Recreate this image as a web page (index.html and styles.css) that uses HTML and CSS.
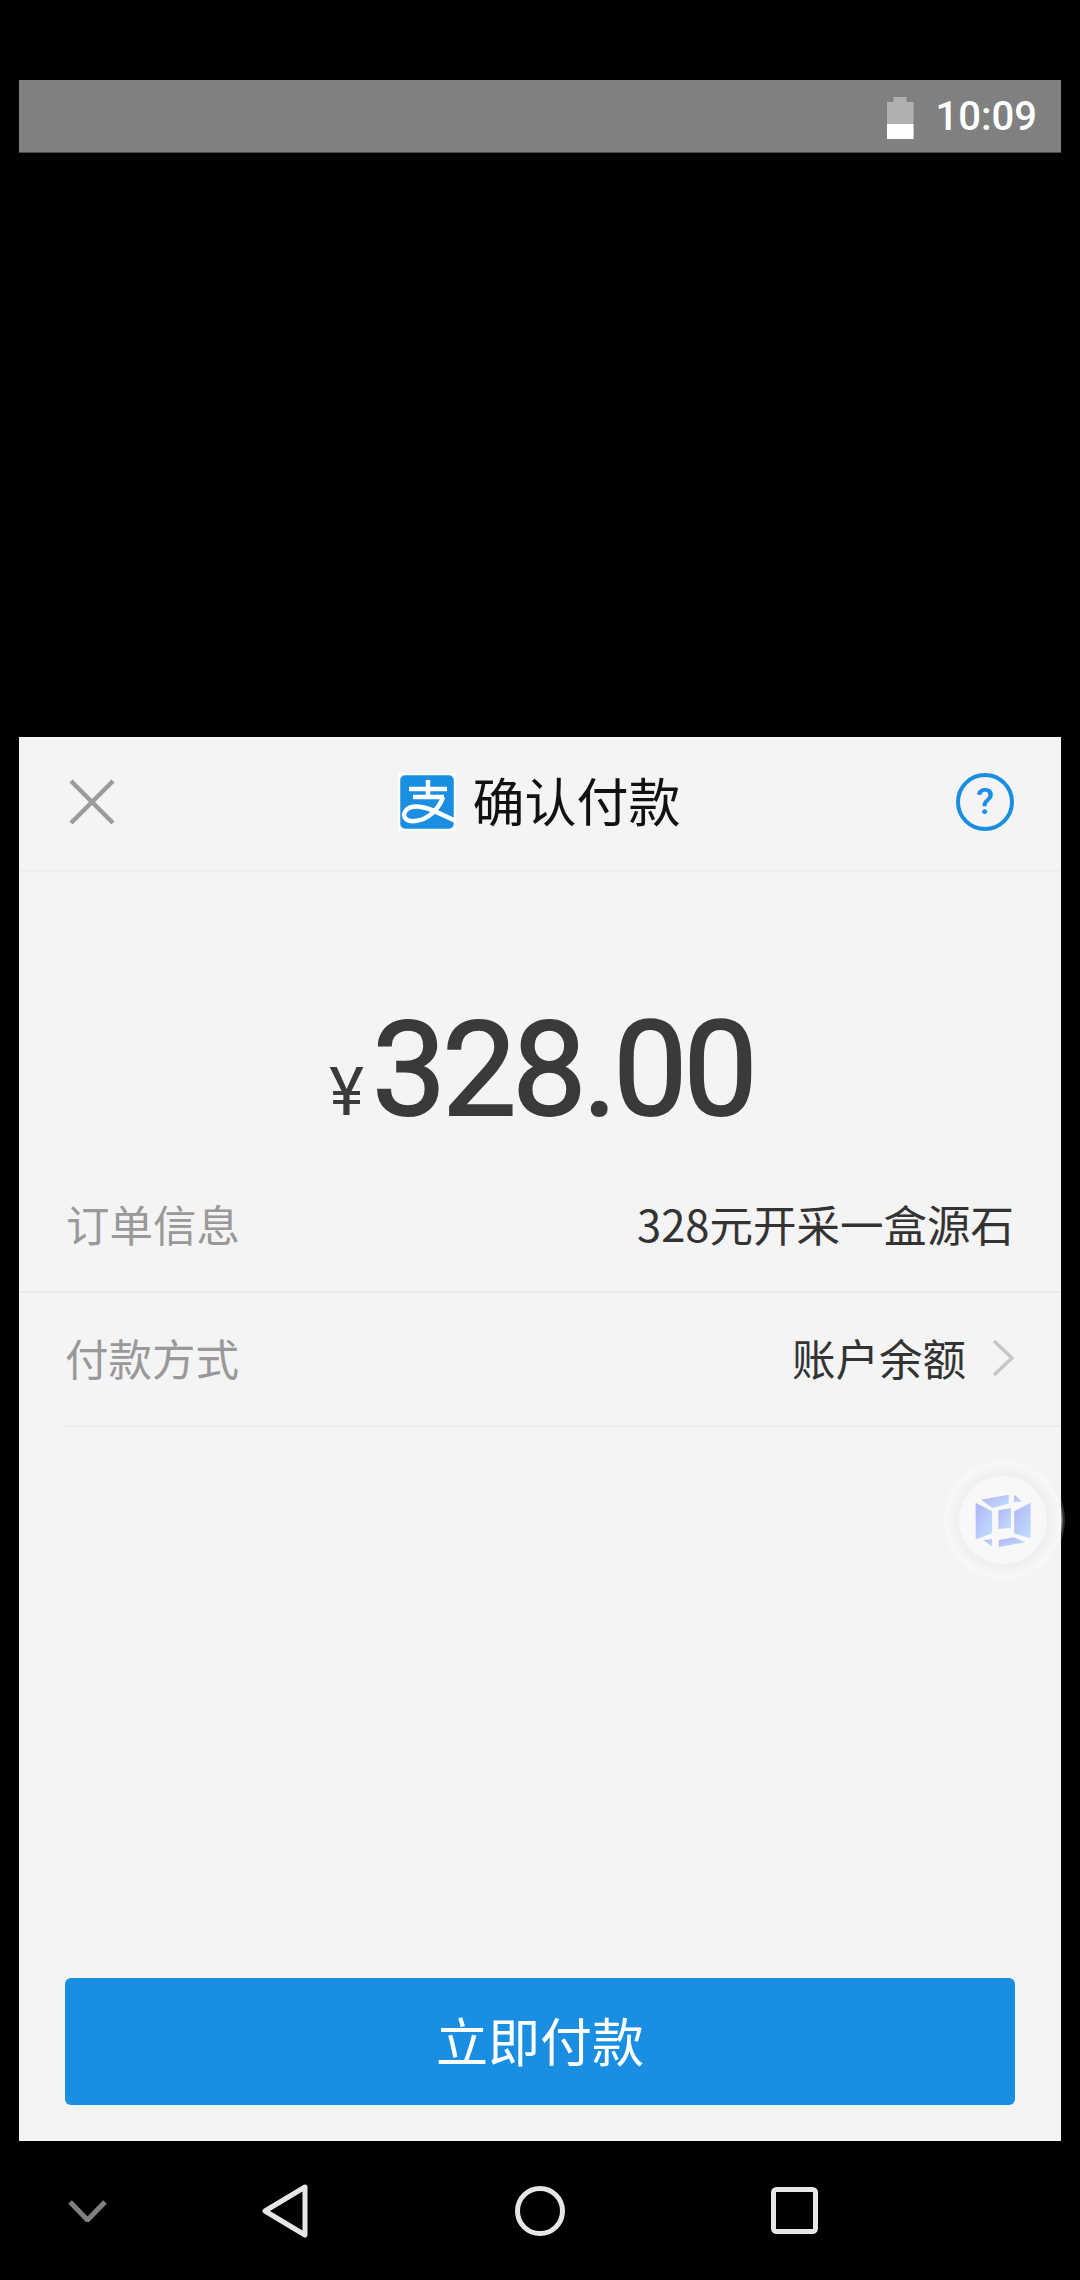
FILE: index.html
```html
<!DOCTYPE html>
<html lang="zh-CN">
<head>
  <meta charset="UTF-8" />
  <title>确认付款</title>
  <link rel="stylesheet" href="styles.css">
</head>
<body>

  <div class="screen">
    <div class="status-bar">
      <div class="battery"><div class="battery-fill"></div></div>
      <span class="clock">10:09</span>
    </div>

    <section class="sheet">
      <header class="sheet-head">
        <svg class="icon-close" viewBox="0 0 46 46">
          <path d="M2 2 L44 44 M44 2 L2 44" />
        </svg>
        <div class="sheet-title">
          <svg class="logo" viewBox="0 0 58 58">
            <rect width="58" height="58" rx="7" fill="#1a8ee1" />
            <path d="M11 16 H49 M30 7 V24 M15 24 H46 M45 24 C41 36 30 47 17 48 C8 49 5 44 6.500 40 C9 33 19 32 28 35 C38 38 48 44 58 48" />
          </svg>
          <h1>确认付款</h1>
        </div>
        <div class="help">?</div>
      </header>

      <div class="amount">
        <span class="yen">¥</span>
        <span class="sum">328.00</span>
      </div>

      <div class="row">
        <span class="row-label">订单信息</span>
        <span class="row-value">328元开采一盒源石</span>
      </div>
      <div class="row row-inset">
        <span class="row-label">付款方式</span>
        <span class="row-value">账户余额</span>
        <svg class="chevron" viewBox="0 0 22 38">
          <path d="M2 2 L20 19 L2 36" />
        </svg>
      </div>

      <div class="sheet-foot">
        <button class="btn-pay">立即付款</button>
      </div>

      <!-- 悬浮球 -->
      <div class="float-ball">
        <div class="float-inner">
          <svg class="cube" viewBox="160 160 182 172">
            <defs>
              <linearGradient id="cubeFill" x1="0" y1="0" x2="1" y2="1">
                <stop offset="0" stop-color="#b2b4f6" />
                <stop offset="1" stop-color="#bfe0fb" />
              </linearGradient>
            </defs>
            <g fill="url(#cubeFill)">
              <polygon points="185,183 268,168 268,195 218,208" />
              <polygon points="285,168 310,188 285,190" />
              <polygon points="168,192 218,218 218,285 172,302 168,298" />
              <polygon points="335,192 285,218 285,285 335,300" />
              <polygon points="237,215 275,208 275,268 237,272" />
              <polygon points="238,305 285,297 318,312 238,327" />
              <polygon points="192,306 218,302 218,326" />
            </g>
          </svg>
        </div>
      </div>
    </section>

    <nav class="nav-bar">
      <svg class="nav-hide" viewBox="0 0 39 22"><path d="M2 2 L19.500 20 L37 2" /></svg>
      <svg class="nav-back" viewBox="0 0 46 54"><path d="M43 3 L3 27 L43 51 Z" /></svg>
      <svg class="nav-home" viewBox="0 0 50 50"><circle cx="25" cy="25" r="22.500" /></svg>
      <svg class="nav-recent" viewBox="0 0 47 47"><rect x="2.500" y="2.500" width="42" height="42" rx="3" /></svg>
    </nav>
  </div>

</body>
</html>
```

FILE: styles.css
```css
* {
  box-sizing: border-box;
}

body {
  margin: 0;
  background-color: #000;
  font-family: "Noto Sans CJK SC", Roboto, sans-serif;
}

.screen {
  width: 1080px;
  height: 2280px;
  display: flex;
  flex-direction: column;
  padding-top: 80px;
}

/* status bar */
.status-bar {
  height: 73px;
  margin: 0 19px 584px;
  background-color: #808080;
  border-bottom: 1px solid #4a4a4a;
  display: flex;
  align-items: center;
  justify-content: flex-end;
  padding-right: 24px;
  gap: 22px;
}

.battery {
  position: relative;
  width: 27px;
  height: 42px;
  margin-top: 4px;
  background-color: #b0b0b0;
  clip-path: polygon(0 5px, 7px 5px, 7px 0, 20px 0, 20px 5px, 100% 5px, 100% 100%, 0 100%);
}

.battery-fill {
  position: absolute;
  left: 0;
  right: 0;
  bottom: 0;
  height: 15px;
  background-color: #fff;
}

.clock {
  font-family: Roboto, sans-serif;
  font-weight: 500;
  font-size: 40px;
  color: #fff;
}

/* sheet */
.sheet {
  position: relative;
  height: 1404px;
  margin: 0 19px;
  background-color: #f4f4f4;
  display: flex;
  flex-direction: column;
}

.sheet-head {
  height: 135px;
  flex-shrink: 0;
  border-bottom: 2px solid #eeeeee;
  display: flex;
  align-items: center;
  justify-content: space-between;
  padding: 0 47px 4px 50px;
}

.icon-close {
  width: 46px;
  height: 46px;
  fill: none;
  stroke: #9b9b9b;
  stroke-width: 4.500;
}

.sheet-title {
  display: flex;
  align-items: center;
  gap: 16px;
  margin-left: 8px;
}

.sheet-title h1 {
  margin: 0;
  padding-bottom: 4px;
  font-size: 52px;
  font-weight: 400;
  line-height: 60px;
  color: #111;
}

.logo {
  width: 58px;
  height: 58px;
  fill: none;
  stroke: #fff;
  stroke-width: 4.500;
}

.help {
  width: 58px;
  height: 58px;
  border: 4px solid #1a8ee1;
  border-radius: 50%;
  display: flex;
  align-items: center;
  justify-content: center;
  font-family: Roboto, sans-serif;
  font-size: 37px;
  font-weight: 500;
  color: #1a8ee1;
}

.amount {
  height: 287px;
  flex-shrink: 0;
  display: flex;
  align-items: baseline;
  justify-content: center;
  padding: 132px 0 0 3px;
  font-family: Roboto, sans-serif;
  color: #3a3a3a;
}

.yen {
  font-size: 66px;
  line-height: 1;
  margin-right: 8px;
}

.sum {
  font-size: 132px;
  font-weight: 400;
  letter-spacing: -4px;
  line-height: 1;
  -webkit-text-stroke: 2px #3a3a3a;
}

.row {
  height: 134px;
  flex-shrink: 0;
  display: flex;
  align-items: center;
  padding: 0 47px 4px;
  border-bottom: 2px solid #ebebeb;
}

.row-inset {
  margin-left: 46px;
  padding-left: 0;
}

.row-label {
  font-size: 43.500px;
  color: #999;
  margin-right: auto;
}

.row-value {
  font-size: 43.500px;
  color: #333;
}

.chevron {
  width: 22px;
  height: 38px;
  margin-left: 26px;
  margin-top: 2px;
  fill: none;
  stroke: #c6c6c6;
  stroke-width: 3.500;
}

.sheet-foot {
  margin-top: auto;
  padding: 0 46px 36px;
}

.btn-pay {
  width: 100%;
  height: 127px;
  border: none;
  border-radius: 6px;
  background-color: #1a8ee1;
  color: #fff;
  font-family: inherit;
  font-size: 52px;
  padding: 0 0 5px;
}

/* floating ball, sits over the sheet edge */
.float-ball {
  position: absolute;
  left: 922px;
  top: 721px;
  width: 124px;
  height: 124px;
  border-radius: 50%;
  background: radial-gradient(closest-side, #eeeeee 70%, #f1f1f1 78%, #f8f8f8 92%, rgba(248, 248, 248, 0.2) 97%, rgba(240, 240, 240, 0.15) 100%);
  display: flex;
  align-items: center;
  justify-content: center;
}

.float-inner {
  width: 88px;
  height: 88px;
  border-radius: 50%;
  background-color: #f8f8f8;
  display: flex;
  align-items: center;
  justify-content: center;
}

.cube {
  width: 60px;
  height: 57px;
}

/* bottom nav */
.nav-bar {
  flex: 1;
  display: flex;
  align-items: center;
  padding-left: 68px;
}

.nav-bar svg {
  fill: none;
  stroke: #e6e6e6;
  stroke-width: 5;
}

.nav-bar .nav-hide {
  width: 39px;
  height: 22px;
  stroke: #808080;
}

.nav-back {
  width: 46px;
  height: 54px;
  margin-left: 155px;
  stroke-linejoin: round;
}

.nav-home {
  width: 50px;
  height: 50px;
  margin-left: 207px;
}

.nav-recent {
  width: 47px;
  height: 47px;
  margin-left: 206px;
}
```
